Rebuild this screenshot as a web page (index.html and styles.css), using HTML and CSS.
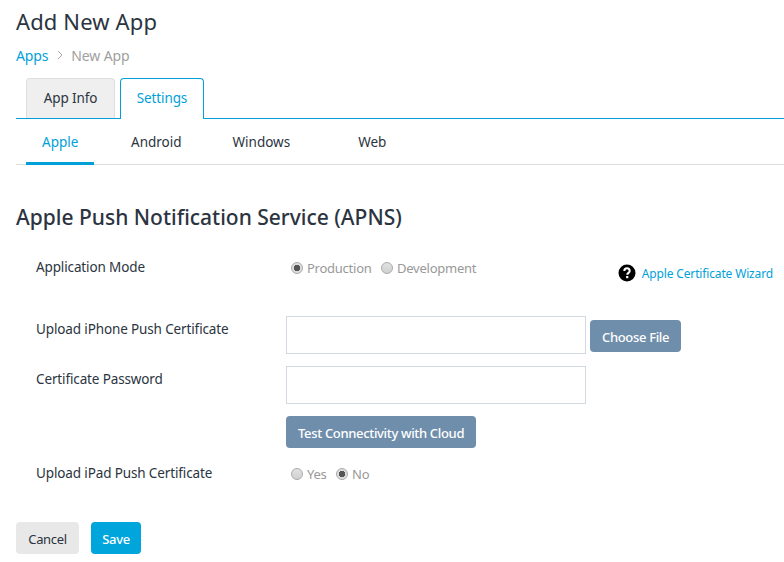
FILE: index.html
```html
<!DOCTYPE html>
<html lang="en">
<head>
    <meta charset="UTF-8">
    <title>Add New App</title>
    <link rel="stylesheet" href="styles.css">
</head>
<body>
    <h1 class="page-title">Add New App</h1>
    <div class="breadcrumb">
        <a href="#">Apps</a>
        <svg class="crumb-sep" width="6" height="10" viewBox="0 0 6 10"><path d="M1 1l4 4-4 4" fill="none" stroke="#aaa" stroke-width="1"/></svg>
        <span>New App</span>
    </div>
    <div class="tabs">
        <a class="tab" href="#">App Info</a>
        <a class="tab tab-active" href="#">Settings</a>
    </div>
    <div class="subtabs">
        <a class="subtab subtab-active" href="#">Apple</a>
        <a class="subtab subtab-android" href="#">Android</a>
        <a class="subtab subtab-windows" href="#">Windows</a>
        <a class="subtab subtab-web" href="#">Web</a>
    </div>
    <h2 class="section-title">Apple Push Notification Service (APNS)</h2>
    <form class="form">
        <div class="row row-mode">
            <label class="row-label">Application Mode</label>
            <div class="radios">
                <span class="radio radio-on"></span><span class="radio-text">Production</span>
                <span class="radio"></span><span class="radio-text">Development</span>
            </div>
            <div class="wizard">
                <svg width="18" height="18" viewBox="0 0 18 18"><circle cx="9" cy="9" r="8.5" fill="#000"/><path d="M6.3 7a2.7 2.7 0 0 1 5.4 0c0 1.800-2.500 1.900-2.500 3.800" fill="none" stroke="#fff" stroke-width="2"/><rect x="8.100" y="12" width="2.200" height="2.200" fill="#fff"/></svg>
                <a href="#">Apple Certificate Wizard</a>
            </div>
        </div>
        <div class="row row-upload">
            <label class="row-label">Upload iPhone Push Certificate</label>
            <div class="text-input"></div>
            <button class="btn btn-steel btn-choose" type="button">Choose File</button>
        </div>
        <div class="row row-password">
            <label class="row-label">Certificate Password</label>
            <div class="text-input"></div>
        </div>
        <div class="row row-test">
            <button class="btn btn-steel" type="button">Test Connectivity with Cloud</button>
        </div>
        <div class="row row-ipad">
            <label class="row-label">Upload iPad Push Certificate</label>
            <div class="radios">
                <span class="radio"></span><span class="radio-text">Yes</span>
                <span class="radio radio-on"></span><span class="radio-text">No</span>
            </div>
        </div>
        <div class="actions">
            <button class="btn btn-cancel" type="button">Cancel</button>
            <button class="btn btn-save" type="button">Save</button>
        </div>
    </form>
</body>
</html>
```

FILE: styles.css
```css
body {
    margin: 0;
    padding: 0 0 0 16px;
    font-family: "Noto Sans", "Open Sans", sans-serif;
    font-size: 13.5px;
    letter-spacing: -0.13px;
    color: #2b3440;
    background-color: #fff;
    overflow: hidden;
}
a {
    color: #00a1d9;
    text-decoration: none;
}
.page-title {
    margin: 0;
    padding-top: 6px;
    font-size: 22px;
    line-height: 30px;
    font-weight: 400;
    letter-spacing: 0.13px;
}
.breadcrumb {
    display: flex;
    align-items: center;
    height: 20px;
    margin-top: 9px;
    font-size: 14px;
    color: #a0a0a0;
}
.crumb-sep {
    margin: 0 8px 0 9px;
}
/* tabs */
.tabs {
    display: flex;
    gap: 5px;
    height: 40px;
    margin-top: 13px;
    padding-left: 10px;
    border-bottom: 1px solid #00a1d9;
}
.tab {
    box-sizing: border-box;
    width: 89px;
    height: 40px;
    line-height: 38px;
    text-align: center;
    color: #2b3440;
    background-color: #efefef;
    border: 1px solid #dedede;
    border-bottom: none;
    border-radius: 4px 4px 0 0;
}
.tab-active {
    width: 84px;
    height: 41px;
    color: #00a1d9;
    background-color: #fff;
    border-color: #00a1d9;
}
.subtabs {
    display: flex;
    height: 45px;
    padding-left: 10px;
    border-bottom: 1px solid #ddd;
}
.subtab {
    line-height: 46px;
    letter-spacing: 0;
    color: #2b3440;
}
.subtab-active {
    width: 52px;
    height: 43px;
    padding: 0 0 0 16px;
    color: #00a1d9;
    border-bottom: 3px solid #00a1d9;
}
.subtab-android {
    margin-left: 37px;
}
.subtab-windows {
    margin-left: 51px;
}
.subtab-web {
    margin-left: 68px;
}
.section-title {
    margin: 35px 0 0;
    font-size: 21px;
    line-height: 34px;
    font-weight: 500;
    letter-spacing: 0;
}
/* form */
.form {
    margin-top: 16px;
}
.row {
    display: flex;
    align-items: flex-start;
}
.row-label {
    width: 250px;
    padding-left: 20px;
    flex-shrink: 0;
    line-height: 20px;
}
.row-mode {
    height: 59px;
    padding-top: 7px;
    padding-right: 11px;
}
.row-upload {
    height: 50px;
}
.row-upload .row-label,
.row-password .row-label {
    padding-top: 3px;
}
.row-password {
    height: 50px;
}
.row-test {
    padding-left: 270px;
    height: 47px;
}
.row-ipad {
    height: 59px;
}
.radios {
    display: flex;
    align-items: center;
    height: 20px;
    margin-top: 1px;
    padding-left: 5px;
    color: #999;
    font-size: 13px;
    letter-spacing: -0.25px;
}
.radio {
    box-sizing: border-box;
    width: 12px;
    height: 12px;
    margin-right: 4px;
    border: 1px solid #aaa;
    border-radius: 50%;
    background: linear-gradient(#e2e2e2, #d0d0d0);
}
.radio-on {
    background: radial-gradient(circle, #555 0 3px, #ddd 3.5px);
}
.radio-text {
    margin-right: 9.5px;
}
.wizard {
    display: flex;
    align-items: center;
    gap: 6px;
    margin-left: auto;
    margin-top: 7px;
    font-size: 12px;
    letter-spacing: -0.15px;
    white-space: nowrap;
}
.text-input {
    box-sizing: border-box;
    width: 300px;
    height: 38px;
    border: 1px solid #d3d9e0;
    background-color: #fff;
}
.btn {
    height: 32px;
    padding: 1px 12px 0;
    border: none;
    border-radius: 4px;
    font-family: inherit;
    font-size: 13px;
    font-weight: 500;
    letter-spacing: -0.33px;
}
.btn-steel {
    color: #fff;
    background-color: #6f8eab;
}
.btn-choose {
    margin-left: 4px;
    margin-top: 4px;
}
.actions {
    display: flex;
    gap: 12px;
}
.btn-cancel {
    width: 63px;
    padding: 1px 0 0;
    font-weight: 400;
    color: #2b3440;
    background-color: #e8e8e8;
}
.btn-save {
    width: 50px;
    padding: 1px 0 0;
    color: #fff;
    background-color: #00a5dc;
}
```
